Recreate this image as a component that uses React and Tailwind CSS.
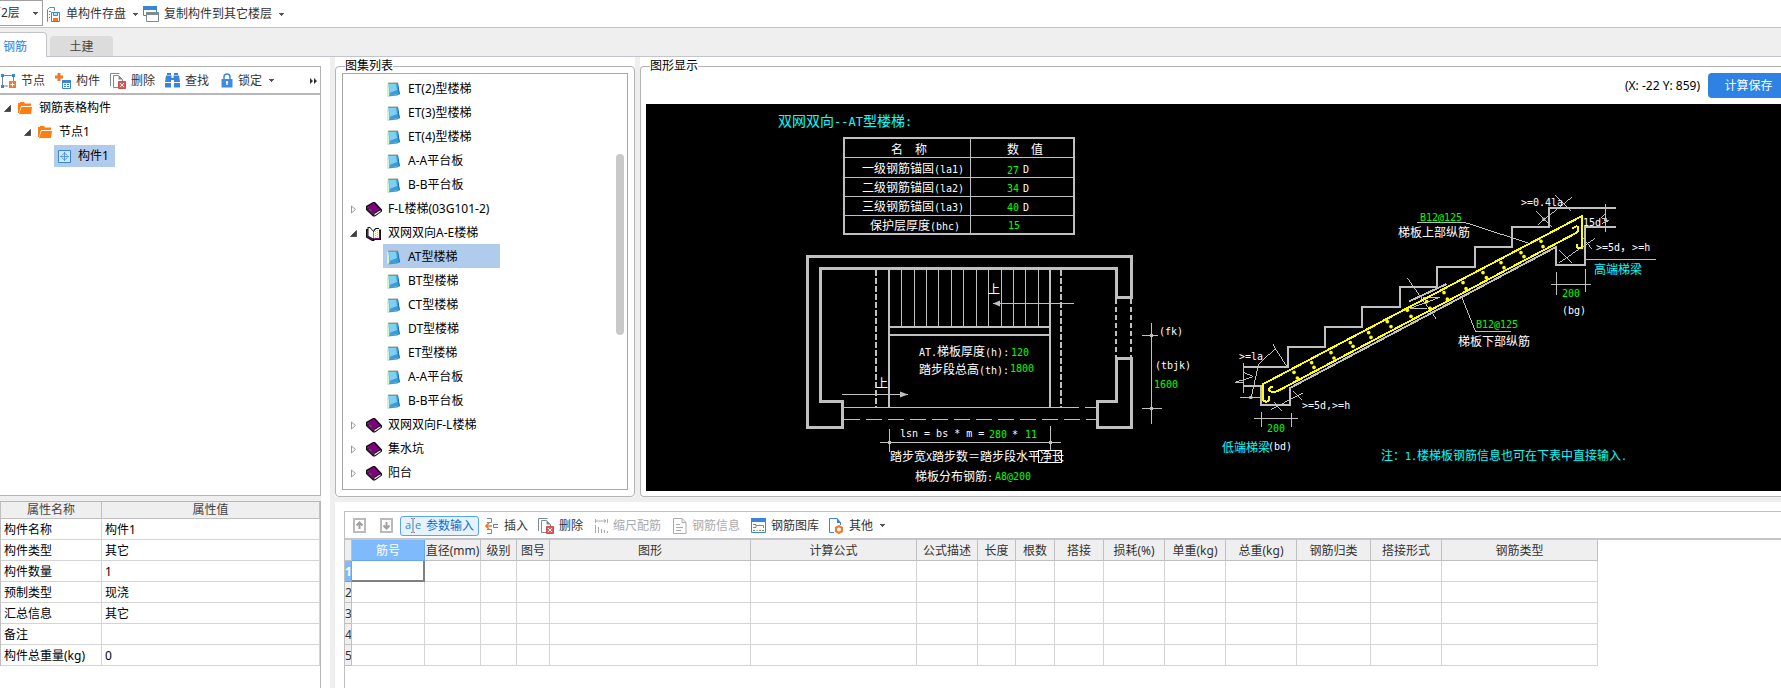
import React, { useState } from "react";

/* ---------- icons ---------- */

const Caret = ({ className = "" }) => (
  <svg className={"shrink-0 " + className} width="5" height="3" viewBox="0 0 5 3" shapeRendering="crispEdges">
    <path d="M0 0h5v1H0zM1 1h3v1H1zM2 2h1v1H2z" fill="#555" />
  </svg>
);

const SaveIcon = () => (
  <svg width="14" height="15" viewBox="0 0 14 15" fill="none">
    <path d="M1 14.500H.5V2.500L2.500.5h5v3" stroke="#6d8a99" />
    <path d="M2 4.500h2M2 7.500h1M2 10.500h1" stroke="#3a85dc" />
    <path d="M4.500 5.500h8v9h-8z" fill="#fff" stroke="#3a85dc" />
    <path d="M6.500 5.500h4v3h-4z" fill="#cfe2f7" stroke="#3a85dc" />
    <path d="M6 11h5v3H6z" fill="#f0792a" />
  </svg>
);

const CopyWindowIcon = () => (
  <svg width="16" height="16" viewBox="0 0 16 16" fill="none">
    <path d="M.5.5h13v9H.5z" fill="#fff" stroke="#3a85dc" />
    <path d="M0 0h14v4H0z" fill="#3a85dc" />
    <path d="M3.500 6.500h12v9h-12z" fill="#fff" stroke="#7c8c93" />
    <path d="M3 6h13v3H3z" fill="#7c8c93" />
  </svg>
);

const NodeIcon = () => (
  <svg width="15" height="14" viewBox="0 0 15 14" fill="none">
    <path d="M2 1.500h10.500V7M1.500 2v10H7" stroke="#6d8a99" />
    <path d="M0 0h3v3H0zM11 0h3v3h-3zM0 11h3v3H0z" fill="#3a85dc" />
    <path d="M8 7h7v7H8z" fill="#f0792a" />
    <path d="M11.500 8.500v4M9.500 10.500h4" stroke="#fff" />
  </svg>
);

const MemberIcon = () => (
  <svg width="16" height="16" viewBox="0 0 16 16" fill="none">
    <path d="M2.500 0h3v2.500H8v3H5.500V8h-3V5.500H0v-3h2.500z" fill="#f0792a" />
    <path d="M7.500 7.500h8v8h-8z" stroke="#3a85dc" />
    <path d="M7 7h9v3H7z" fill="#3a85dc" />
    <path d="M9 11.500h2M12 11.500h2M9 13.500h2M12 13.500h2" stroke="#3a85dc" />
  </svg>
);

const DeleteIcon = () => (
  <svg width="16" height="16" viewBox="0 0 16 16" fill="none">
    <path d="M.5 13V.5h9" stroke="#7c8c93" />
    <path d="M8 14.500H3.500v-12h5l4 4V8" stroke="#7c8c93" />
    <path d="M8.500 2.500v4h4z" fill="#7c8c93" />
    <path d="M8.500 8.500h7v7h-7z" fill="#e05c5c" stroke="#c94f4f" />
    <path d="M10 10l4 4M14 10l-4 4" stroke="#fff" />
  </svg>
);

const FindIcon = () => (
  <svg width="15" height="15" viewBox="0 0 15 15">
    <path d="M2 0h4v2H2zM9 0h4v2H9zM1 2.500h5.500V5h2V2.500H14L15 9H9V7H6v2H0zM0 10h6v4.500H0zM9 10h6v4.500H9z" fill="#3a85dc" />
  </svg>
);

const LockIcon = () => (
  <svg width="12" height="15" viewBox="0 0 12 15" fill="none">
    <path d="M3 7V4a3 3 0 0 1 6 0v3" stroke="#3a85dc" strokeWidth="1.500" />
    <path d="M.5 6h11v8.500H.5z" fill="#3f8be2" />
    <path d="M6 8a1.200 1.200 0 0 1 .7 2.200V12H5.300v-1.800A1.200 1.200 0 0 1 6 8z" fill="#fff" />
  </svg>
);

const MoreIcon = () => (
  <svg width="7" height="6" viewBox="0 0 7 6">
    <path d="M0 0l3 3-3 3zM4 0l3 3-3 3z" fill="#333" />
  </svg>
);

const FolderIcon = () => (
  <svg width="15" height="13" viewBox="0 0 15 13">
    <path d="M0 1h2V0h4l1 1.500h6V4H3L1 11H0z" fill="#ff7f0e" />
    <path d="M3.500 5H14l-1 7H1z" fill="#ff7f0e" />
  </svg>
);

const ComponentIcon = () => (
  <svg width="13" height="13" viewBox="0 0 13 13" fill="none">
    <path d="M.5.5h12v12H.5z" fill="#d5e8fc" stroke="#3a85dc" />
    <path d="M6.500 2v9M2 6.500h9M3.500 5.500l3-2.500 3 2.500M3.500 7.500l3 2.500 3-2.500" stroke="#3a85dc" strokeWidth=".8" />
  </svg>
);

const NotepadIcon = () => (
  <svg width="14" height="15" viewBox="0 0 14 15">
    <path d="M9 1h2l2 11-2 1z" fill="#1d5fa0" />
    <path d="M0 2l2-1 1 11-2.500 2.500H0z" fill="#d9efd0" />
    <path d="M1.500 1h9L12 12l-9.500 1z" fill="#2f9fdd" />
    <path d="M2 2h7l1 6-7.500 3z" fill="#7fd0f5" />
    <path d="M1 14.500L3 12.500l9-.5-1.500 1.500z" fill="#4c93bd" />
    <path d="M1 .5h10v1H1z" fill="#a8977c" />
  </svg>
);

const BookIcon = () => (
  <svg width="16" height="15" viewBox="0 0 16 15">
    <path d="M0 4L7 0h2l7 7.500v2L9 14.500H7L0 8z" fill="#111" />
    <path d="M1.500 4.500L8 1l6 6.500-5.500 3.500z" fill="#800080" />
    <path d="M1 5.500l6.500 6.500v1.500L1 7.500z" fill="#800080" />
    <path d="M8.500 12l6-3.800v1.300l-6 4z" fill="#fff" />
    <path d="M2 5.500l6 6" stroke="#fff" strokeWidth=".8" strokeDasharray="1 1" />
  </svg>
);

const OpenBookIcon = () => (
  <svg width="16" height="15" viewBox="0 0 16 15">
    <path d="M0 3h1.500V1H4l3.500 4V4l2-2H13v1.500h2V14H9l-1 1H6L0 11.500z" fill="#111" />
    <path d="M1 4h1v6.500l5 2.500v1L1 11zM8.500 13H14V4.500" fill="#800080" />
    <path d="M2.500 2H4l3.500 4v6.500l-5-2.500z" fill="#fff" />
    <path d="M8 5.500L10 3h3v9H9.500L8 12.500z" fill="#fffbe0" />
    <path d="M9.500 5v7M11.500 4v8" stroke="#d6c864" strokeDasharray="1 1" />
  </svg>
);

const ExpandedArrow = () => (
  <svg width="7" height="7" viewBox="0 0 7 7">
    <path d="M6.500.5v6h-6z" fill="#404040" stroke="#222" strokeWidth=".6" />
  </svg>
);

const CollapsedArrow = () => (
  <svg width="7" height="9" viewBox="0 0 7 9">
    <path d="M1.500 1l4 3.500-4 3.500z" fill="#fff" stroke="#999" />
  </svg>
);

const MoveIcon = ({ down }) => (
  <svg width="13" height="15" viewBox="0 0 13 15" fill="none">
    <path d="M1 1h11v13H1z" stroke="#bababa" strokeWidth="2" />
    <path d={down ? "M6.500 4v6M3.500 7.500l3 3 3-3" : "M6.500 11V5M3.500 7.500l3-3 3 3"} stroke="#a0a0a0" strokeWidth="2" />
  </svg>
);

const ParamIcon = () => (
  <svg width="16" height="15" viewBox="0 0 16 15" fill="none">
    <text x="0" y="11" className="fill-[#3a85dc] font-['Open_Sans'] text-[11px]">a</text>
    <text x="10" y="11" className="fill-[#3a85dc] font-['Open_Sans'] text-[11px]">e</text>
    <path d="M8 1v13M6 .5h1.500M8.500.5H10M6 14.500h1.500M8.500 14.500H10" stroke="#777" />
  </svg>
);

const InsertIcon = () => (
  <svg width="14" height="16" viewBox="0 0 14 16" fill="none">
    <path d="M2 .5h4.500v4H2M2 15.500h4.500v-4H2" stroke="#7c8c93" />
    <path d="M13 6.500H8.500v3H13" stroke="#3a85dc" />
    <path d="M7 8H2M4 5L1 8l3 3" stroke="#f0792a" strokeWidth="1.700" />
  </svg>
);

const ScaleIcon = () => (
  <svg width="13" height="14" viewBox="0 0 13 14" fill="none" stroke="#aaa">
    <path d="M.5 0v4M.5 2h10M9 .5L11 2 9 3.500M12.500 0v4M.5 6v8M3.500 8v6M6.500 10v4M9.500 11v3M12.500 12v2" />
  </svg>
);

const InfoIcon = () => (
  <svg width="14" height="16" viewBox="0 0 14 16" fill="none" stroke="#aaa">
    <path d="M.5.5h8.500l4 4v11H.5zM9 .5v4h4M3 6.500h4M3 9.500h7M3 12.500h5" />
  </svg>
);

const LibraryIcon = () => (
  <svg width="15" height="15" viewBox="0 0 15 15" fill="none">
    <path d="M.5.5h14v14H.5z" fill="#fff" stroke="#3a85dc" />
    <path d="M0 0h15v4H0z" fill="#3a85dc" />
    <path d="M2 6.500h3v3H2M5 7.500h7.500V10" stroke="#7c8c93" />
    <path d="M2 12.500h2" stroke="#3a85dc" />
    <path d="M5 12.500h2" stroke="#e0b93a" />
    <path d="M8 12.500h2" stroke="#e05c5c" />
    <path d="M11 12.500h2" stroke="#4aa64a" />
  </svg>
);

const OtherIcon = () => (
  <svg width="15" height="16" viewBox="0 0 15 16" fill="none">
    <path d="M5 14.500H.5V.5H8l3.500 4V7" stroke="#3a85dc" />
    <path d="M8 0v5h4z" fill="#3a85dc" />
    <circle cx="10" cy="11.500" r="3" stroke="#f0792a" strokeWidth="2" />
    <path d="M10 7v2M10 14v2M6 9.300l1.700 1M12.300 12.700l1.700 1M14 9.300l-1.700 1M7.700 12.700l-1.700 1" stroke="#f0792a" strokeWidth="1.400" />
  </svg>
);

/* ---------- data ---------- */

const atlas = [
  { name: "ET(2)型楼梯", leaf: true },
  { name: "ET(3)型楼梯", leaf: true },
  { name: "ET(4)型楼梯", leaf: true },
  { name: "A-A平台板", leaf: true },
  { name: "B-B平台板", leaf: true },
  { name: "F-L楼梯(03G101-2)" },
  { name: "双网双向A-E楼梯", open: true },
  { name: "AT型楼梯", leaf: true },
  { name: "BT型楼梯", leaf: true },
  { name: "CT型楼梯", leaf: true },
  { name: "DT型楼梯", leaf: true },
  { name: "ET型楼梯", leaf: true },
  { name: "A-A平台板", leaf: true },
  { name: "B-B平台板", leaf: true },
  { name: "双网双向F-L楼梯" },
  { name: "集水坑" },
  { name: "阳台" },
];

const properties = [
  ["构件名称", "构件1"],
  ["构件类型", "其它"],
  ["构件数量", "1"],
  ["预制类型", "现浇"],
  ["汇总信息", "其它"],
  ["备注", ""],
  ["构件总重量(kg)", "0"],
];

const columns = [
  { title: "筋号", width: 73 },
  { title: "直径(mm)", width: 56 },
  { title: "级别", width: 36 },
  { title: "图号", width: 33 },
  { title: "图形", width: 201 },
  { title: "计算公式", width: 166 },
  { title: "公式描述", width: 61 },
  { title: "长度", width: 38 },
  { title: "根数", width: 39 },
  { title: "搭接", width: 49 },
  { title: "损耗(%)", width: 61 },
  { title: "单重(kg)", width: 61 },
  { title: "总重(kg)", width: 71 },
  { title: "钢筋归类", width: 74 },
  { title: "搭接形式", width: 71 },
  { title: "钢筋类型", width: 156 },
];

/* ---------- drawing ---------- */

// Han characters are drawn at 12px, everything else at a 6px pitch
const Label = ({ x, y, children, color = "fill-white" }) => (
  <text x={x} y={y} className={color} xmlSpace="preserve">
    {children.split(/([\u3000-\u9fff\uff00-\uffef]+)/).map((part, i) =>
      i % 2 ? (
        <tspan key={i} className="font-['Noto_Sans_CJK_SC'] text-[12px]">{part}</tspan>
      ) : (
        <tspan key={i} className="font-['DejaVu_Sans_Mono'] text-[10px]">{part}</tspan>
      )
    )}
  </text>
);

const GREEN = "fill-[#00ff00]";
const CYAN = "fill-[#00ffff]";

const steps = [901, 914, 926, 938, 951, 963, 976, 988, 1001, 1013, 1025, 1038];

const bars = [
  [252, 577], [305, 548], [363, 518], [421, 488], [476, 458], [532, 425], [592, 391],
  [650, 365], [702, 338], [759, 308], [819, 278], [873, 248], [933, 218], [993, 184],
  [262, 594], [312, 562], [372, 534], [429, 499], [483, 472], [543, 440], [603, 409],
  [660, 385], [712, 357], [768, 326], [829, 293], [882, 263], [942, 230], [999, 200],
];

const StairDrawing = () => (
  <svg className="block h-[387px] w-[1135px]" viewBox="646 104 1135 387" role="img" aria-label="AT型楼梯">
    {/* anchorage table */}
    <g fill="none" stroke="#c0c0c0" shapeRendering="crispEdges">
      <path d="M844 138h230v96H844z" strokeWidth="2" />
      <path d="M845 157.500h229M845 177.500h229M845 196.500h229M845 215.500h229M970.500 139v95" />
    </g>

    {/* plan */}
    <g fill="none" stroke="#c0c0c0" shapeRendering="crispEdges">
      <path
        d="M1131.500 297.500V256.500H807.500V427.500H842.500V401.500H820.500V268.500H1116.500V297.500zM1116.500 358.500H1131.500V427.500H1097.500V401.500H1116.500z"
        strokeWidth="3"
      />
      <path d="M889 269V407M1050 269V407M889 327H1050M889 335H1050" strokeWidth="2" />
      <path d="M876 270V407M1061 270V407" strokeWidth="2" strokeDasharray="6 2" />
      <path d="M1116 299V357M1131 299V357" strokeWidth="2" strokeDasharray="5 3" />
      {steps.map((x) => (
        <path key={x} d={`M${x + 0.5} 269V327`} />
      ))}
      <path d="M844 407.500H1079M1085 407.500H1097" />
      <path d="M844 419.500H1097" strokeDasharray="16 6" />
      <path d="M993 303.500H1074M842 394.500H908" />
      <path d="M1151.500 323V424M1142 335.500H1158M1142 408.500H1162" />
      <path d="M880 442.500H1061M889.500 429V452M1050.500 426V450" />
    </g>
    <g fill="#c0c0c0">
      <path d="M993 303.500l7-3v6zM908 394.500l-8-3v6z" />
      <path d="M1150 334h3v3h-3zM1150 407h3v3h-3zM888 441h3v3h-3zM1049 441h3v3h-3z" />
    </g>
    <path d="M1038.500 450.500h23v12h-23z" fill="none" stroke="#fff" shapeRendering="crispEdges" />

    {/* section */}
    <g transform="translate(1210 180) scale(.33333)" fill="none" stroke="#c0c0c0">
      <g strokeWidth="6" shapeRendering="crispEdges">
        <path d="M100 561H234V501H345V441H457V381H571V321H682V261H796V201H907V141H1018V84H1218" />
        <path d="M100 618H153V675H240V624L1038 201V255H1125V141H1218" />
        <path d="M598 364L710 312" />
      </g>
      <g strokeWidth="3" shapeRendering="crispEdges">
        <path d="M621 127H763L955 189M757 355L797 455H903M1128 238H1338" />
        <path d="M1023 313H1143M1039 276V345M1126 267V335" />
        <path d="M132 715H264M154 697V741M244 699V741" />
        <path d="M592 294L678 416M640 352H690L600 385H650" />
        <path d="M978 94L1026 140M985 133L1085 52M1035 46L1083 94" />
        <path d="M1187 72V156M1187 102L1174 113L1196 122L1176 130" />
        <path d="M1118 172L1146 207M1155 175L1048 248M1048 212L1086 248" />
        <path d="M100 548V638M100 577L130 590L75 607H100M90 652H153" />
        <path d="M123 655L146 552L196 506L190 492M192 500L231 560" />
        <path d="M183 688L278 640M193 665L215 694M247 632L275 660" />
      </g>
      <g stroke="#ff0" strokeWidth="6" shapeRendering="crispEdges">
        <path d="M177 648V658Q176 665 168 665Q158 664 158 655V613L1116 108V203L1106 205Q1100 203 1100 192" />
        <path d="M190 622Q178 620 176 630Q180 637 196 635L205 632L1100 158Q1106 153 1105 142Q1098 135 1088 146" />
      </g>
      {bars.map(([x, y]) => (
        <circle key={x} cx={x} cy={y} r="5.500" fill="#ff0" stroke="none" />
      ))}
      <path d="M1182 115h9v9h-9zM118 648h9v9h-9zM997 113h9v9h-9z" fill="#c0c0c0" stroke="none" />
    </g>

    {/* texts */}
    <text x="778" y="126" className="fill-[#00ffff]">
      <tspan className="font-['Noto_Sans_CJK_SC'] text-[14px]">双网双向</tspan>
      <tspan className="font-['DejaVu_Sans_Mono'] text-[12px]">--AT</tspan>
      <tspan className="font-['Noto_Sans_CJK_SC'] text-[14px]">型楼梯</tspan>
      <tspan className="font-['DejaVu_Sans_Mono'] text-[12px]">:</tspan>
    </text>
    <Label x={891} y={154}>名　称</Label>
    <Label x={1007} y={154}>数　值</Label>
    <Label x={862} y={173}>一级钢筋锚固(la1)</Label>
    <Label x={862} y={192}>二级钢筋锚固(la2)</Label>
    <Label x={862} y={211}>三级钢筋锚固(la3)</Label>
    <Label x={870} y={230}>保护层厚度(bhc)</Label>
    <Label x={1007} y={174} color={GREEN}>27</Label>
    <Label x={1007} y={192} color={GREEN}>34</Label>
    <Label x={1007} y={211} color={GREEN}>40</Label>
    <Label x={1008} y={229} color={GREEN}>15</Label>
    <Label x={1023} y={173}>D</Label>
    <Label x={1023} y={192}>D</Label>
    <Label x={1023} y={211}>D</Label>

    <Label x={988} y={294}>上</Label>
    <Label x={876} y={388}>上</Label>
    <Label x={919} y={356}>AT.梯板厚度(h):</Label>
    <Label x={1011} y={356} color={GREEN}>120</Label>
    <Label x={919} y={374}>踏步段总高(th):</Label>
    <Label x={1010} y={372} color={GREEN}>1800</Label>
    <Label x={1159} y={335}>(fk)</Label>
    <Label x={1155} y={369}>(tbjk)</Label>
    <Label x={1154} y={388} color={GREEN}>1600</Label>
    <Label x={900} y={437}>lsn = bs * m =</Label>
    <Label x={989} y={438} color={GREEN}>280</Label>
    <Label x={1012} y={438}>*</Label>
    <Label x={1025} y={438} color={GREEN}>11</Label>
    <Label x={890} y={461}>踏步宽X踏步数＝踏步段水平净长</Label>
    <Label x={915} y={481}>梯板分布钢筋:</Label>
    <Label x={995} y={480} color={GREEN}>A8@200</Label>

    <Label x={1521} y={206}>&gt;=0.4la</Label>
    <Label x={1583} y={226}>15d</Label>
    <Label x={1420} y={221} color={GREEN}>B12@125</Label>
    <Label x={1398} y={237}>梯板上部纵筋</Label>
    <Label x={1596} y={251}>&gt;=5d，&gt;=h</Label>
    <Label x={1594} y={274} color={CYAN}>高端梯梁</Label>
    <Label x={1562} y={297} color={GREEN}>200</Label>
    <Label x={1562} y={314}>(bg)</Label>
    <Label x={1476} y={328} color={GREEN}>B12@125</Label>
    <Label x={1458} y={346}>梯板下部纵筋</Label>
    <Label x={1239} y={360}>&gt;=la</Label>
    <Label x={1302} y={409}>&gt;=5d,&gt;=h</Label>
    <Label x={1267} y={432} color={GREEN}>200</Label>
    <Label x={1222} y={452} color={CYAN}>低端梯梁</Label>
    <Label x={1268} y={450}>(bd)</Label>
    <Label x={1381} y={460} color={CYAN}>注：1.楼梯板钢筋信息也可在下表中直接输入.</Label>
  </svg>
);

/* ---------- parts ---------- */

const ToolButton = ({ icon, children, caret, disabled, className = "" }) => (
  <button
    type="button"
    disabled={disabled}
    className={"flex items-center gap-[5px] whitespace-nowrap text-[#333] disabled:text-[#aaa] " + className}
  >
    {icon}
    {children}
    {caret && <Caret className="ml-[2px]" />}
  </button>
);

const TopBar = () => (
  <div className="flex h-[28px] shrink-0 items-start overflow-hidden border-b border-[#c4c4cc]">
    <div className="relative -ml-3 shrink-0">
      <select
        aria-label="楼层"
        className="block h-[26px] w-[55px] appearance-none border border-[#a0a0a0] bg-white text-[12px] text-[#333] outline-none"
      >
        <option>第2层</option>
      </select>
      <Caret className="pointer-events-none absolute top-3 right-[5px]" />
    </div>
    <ToolButton icon={<SaveIcon />} caret className="ml-1 h-[28px]">
      单构件存盘
    </ToolButton>
    <ToolButton icon={<CopyWindowIcon />} caret className="ml-[5px] h-[28px]">
      复制构件到其它楼层
    </ToolButton>
  </div>
);

const Tabs = ({ tab, onChange }) => (
  <div role="tablist" className="flex h-[29px] shrink-0 items-end gap-[3px] border-b border-[#c4c4cc] bg-[#efefef]">
    {["钢筋", "土建"].map((name) => (
      <button
        key={name}
        type="button"
        role="tab"
        aria-selected={tab === name}
        onClick={() => onChange(name)}
        className={
          tab === name
            ? "-mb-px h-[25px] w-[47px] rounded-tr border-t border-r border-[#c4c4cc] bg-white pt-[3px] pr-4 text-[#2a80e0]"
            : "h-[20px] w-[63px] rounded-t bg-[#dcdcdc] pt-px text-[#444]"
        }
      >
        {name}
      </button>
    ))}
  </div>
);

const MemberPanel = () => (
  <section className="border-t border-r border-b border-[#b4b4b4]">
    <div className="flex h-[28px] items-center border-b-2 border-[#b8b8bc] pt-px pl-[1px]">
      <ToolButton icon={<NodeIcon />}>节点</ToolButton>
      <ToolButton icon={<MemberIcon />} className="ml-[10px]">构件</ToolButton>
      <ToolButton icon={<DeleteIcon />} className="ml-[10px]">删除</ToolButton>
      <ToolButton icon={<FindIcon />} className="ml-[10px]">查找</ToolButton>
      <ToolButton icon={<LockIcon />} caret className="ml-[12px]">锁定</ToolButton>
      <button type="button" aria-label="更多" className="mr-[3px] ml-auto">
        <MoreIcon />
      </button>
    </div>
    <ul className="h-[400px] pt-px text-black">
      <li className="flex h-6 items-center pl-1">
        <ExpandedArrow />
        <span className="mr-[6px] ml-[7px]"><FolderIcon /></span>
        钢筋表格构件
      </li>
      <li className="flex h-6 items-center pl-6">
        <ExpandedArrow />
        <span className="mr-[6px] ml-[7px]"><FolderIcon /></span>
        节点1
      </li>
      <li className="flex h-6 items-center pl-[54px]">
        <span className="flex h-[22px] items-center gap-[7px] bg-[#b1cbec] pr-[6px] pl-1">
          <ComponentIcon />
          构件1
        </span>
      </li>
    </ul>
  </section>
);

const PropertyTable = () => (
  <section className="flex-1 border-t border-r border-[#b8b8bc]">
    <table className="w-full table-fixed border-separate border-spacing-0 border-l border-[#c0c0c0] text-left">
      <thead>
        <tr className="bg-[#efefef] text-center text-[#444]">
          <th className="h-[17px] w-[101px] border-r border-b border-[#c0c0c0] p-0 font-normal">属性名称</th>
          <th className="border-r border-b border-[#c0c0c0] p-0 font-normal">属性值</th>
        </tr>
      </thead>
      <tbody>
        {properties.map(([name, value]) => (
          <tr key={name}>
            <th className="h-[21px] border-r border-b border-[#d4d4d4] pt-[2px] pr-0 pb-0 pl-[3px] font-normal text-black">{name}</th>
            <td className="h-[21px] border-r border-b border-[#d4d4d4] pt-[2px] pr-0 pb-0 pl-[3px] text-black">{value}</td>
          </tr>
        ))}
      </tbody>
    </table>
  </section>
);

const AtlasList = () => {
  const [selected, setSelected] = useState(7);
  return (
    <fieldset className="mt-[2px] w-[300px] shrink-0 rounded border border-[#b4b4b4]">
      <legend className="ml-[9px] leading-[14px] text-black">图集列表</legend>
      <div className="relative mx-[6px] mb-[6px] border border-[#a8a8a8] pt-[2px] pb-[5px]">
        <ul className="text-black">
          {atlas.map((item, i) =>
            item.leaf ? (
              <li key={i} className="h-6 pl-10">
                <button
                  type="button"
                  onClick={() => setSelected(i)}
                  className={"flex h-6 w-[117px] items-center gap-[7px] pt-[2px] pl-1 " + (i === selected ? "bg-[#b1cbec]" : "")}
                >
                  <NotepadIcon />
                  {item.name}
                </button>
              </li>
            ) : (
              <li key={i} className="flex h-6 items-center pt-[2px] pl-[7px]">
                {item.open ? <ExpandedArrow /> : <CollapsedArrow />}
                <span className="mr-[6px] ml-[9px]">{item.open ? <OpenBookIcon /> : <BookIcon />}</span>
                {item.name}
              </li>
            )
          )}
        </ul>
        <div className="absolute top-20 right-[3px] h-[181px] w-2 rounded-full bg-[#c9c9c9]" />
      </div>
    </fieldset>
  );
};

const DrawingPanel = () => (
  <fieldset className="mt-[2px] min-w-0 flex-1 rounded-l border border-r-0 border-[#b4b4b4]">
    <legend className="ml-[9px] leading-[14px] text-black">图形显示</legend>
    <div className="flex h-[31px] items-start justify-end gap-2 overflow-hidden">
      <output className="leading-[26px] text-black">(X: -22 Y: 859)</output>
      <button type="button" className="-mr-2 h-[25px] w-[81px] rounded-l-sm bg-[#2d82e4] text-white">计算保存</button>
    </div>
    <div className="mb-[5px] ml-[5px] overflow-hidden bg-black">
      <StairDrawing />
    </div>
  </fieldset>
);

const RebarPanel = () => (
  <section className="mt-[9px] ml-[9px] flex-1 border-t border-l border-[#c0c0c0]">
    <div className="flex h-[28px] items-center border-b-2 border-[#c4c4cc] pt-px pl-2">
      <button type="button" aria-label="上移"><MoveIcon /></button>
      <button type="button" aria-label="下移" className="ml-[14px]"><MoveIcon down /></button>
      <ToolButton
        icon={<ParamIcon />}
        className="ml-[7px] h-5 rounded-[3px] border border-[#5aa5f0] bg-[#e6f2fe] px-1 text-[#0a6fd8]!"
      >
        参数输入
      </ToolButton>
      <ToolButton icon={<InsertIcon />} className="ml-[6px]">插入</ToolButton>
      <ToolButton icon={<DeleteIcon />} className="ml-[10px]">删除</ToolButton>
      <ToolButton icon={<ScaleIcon />} disabled className="ml-[12px]">缩尺配筋</ToolButton>
      <ToolButton icon={<InfoIcon />} disabled className="ml-[12px]">钢筋信息</ToolButton>
      <ToolButton icon={<LibraryIcon />} className="ml-[11px]">钢筋图库</ToolButton>
      <ToolButton icon={<OtherIcon />} caret className="ml-[10px]">其他</ToolButton>
    </div>
    <table className="w-[1253px] table-fixed border-separate border-spacing-0">
      <colgroup>
        <col className="w-[7px]" />
        {columns.map((c) => (
          <col key={c.title} style={{ width: c.width }} />
        ))}
      </colgroup>
      <thead>
        <tr>
          <th className="h-[21px] border-r border-b border-[#c0c0c0] bg-[#efefef] p-0" />
          {columns.map((c, i) => (
            <th
              key={c.title}
              className={
                "h-[21px] whitespace-nowrap border-r border-b px-0 pt-[2px] pb-0 font-normal " +
                (i === 0 ? "border-[#66a6ee] bg-[#7fbafd] text-white" : "border-[#c0c0c0] bg-[#efefef] text-[#333]")
              }
            >
              {c.title}
            </th>
          ))}
        </tr>
      </thead>
      <tbody>
        {[1, 2, 3, 4, 5].map((n) => (
          <tr key={n}>
            <th
              className={
                "h-[21px] overflow-hidden border-r border-b px-0 pt-[2px] pb-0 " +
                (n === 1
                  ? "border-[#66a6ee] bg-[#7fbafd] font-bold text-white"
                  : "border-[#c0c0c0] bg-[#efefef] font-normal text-[#333]")
              }
            >
              {n}
            </th>
            {columns.map((c, i) => (
              <td
                key={c.title}
                className={
                  n === 1 && i === 0
                    ? "h-[21px] border-r-2 border-b-2 border-[#808080] p-0"
                    : "h-[21px] border-r border-b border-[#d4d4d4] p-0"
                }
              />
            ))}
          </tr>
        ))}
      </tbody>
    </table>
  </section>
);

const App = () => {
  const [tab, setTab] = useState("钢筋");

  return (
    <div className="flex min-h-screen flex-col overflow-hidden bg-white font-['Noto_Sans','Noto_Sans_CJK_SC',sans-serif] text-[12px] leading-4">
      <TopBar />
      <Tabs tab={tab} onChange={setTab} />

      <main className="flex flex-1">
        <div className="flex w-[321px] shrink-0 flex-col pt-[9px]">
          <MemberPanel />
          <div className="h-[5px] bg-[#efefef]" />
          <PropertyTable />
        </div>

        <div className="ml-[9px] w-[5px] shrink-0 bg-[#efefef]" />

        <div className="flex min-w-0 flex-1 flex-col">
          <div className="flex">
            <AtlasList />
            <div className="w-[5px] shrink-0 bg-[#efefef]" />
            <DrawingPanel />
          </div>
          <div className="h-[5px] bg-[#efefef]" />
          <RebarPanel />
        </div>
      </main>
    </div>
  );
};

export default App;
